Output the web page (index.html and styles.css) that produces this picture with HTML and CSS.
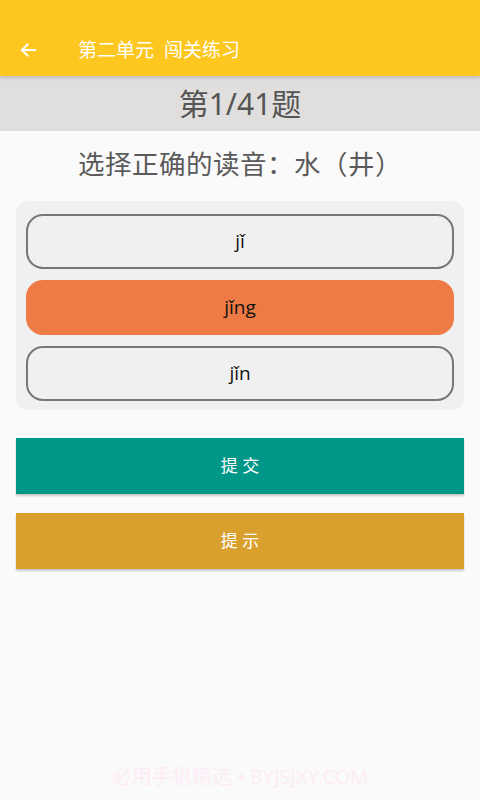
FILE: index.html
```html
<!DOCTYPE html>
<html lang="zh-CN">

<head>
  <meta charset="UTF-8">
  <meta name="viewport" content="width=device-width, initial-scale=1.0">
  <title>闯关练习</title>
  <link rel="stylesheet" href="styles.css">
</head>

<body>
  <div class="app-bar">
    <span class="back">
      <svg width="16" height="14" viewBox="0 0 16 14">
        <path d="M15 7H2M7.5 1.5L2 7l5.5 5.5" fill="none" stroke="#fff" stroke-width="2" stroke-linecap="square" />
      </svg>
    </span>
    <span class="title">第二单元&nbsp; 闯关练习</span>
  </div>

  <div class="progress">第1/41题</div>

  <div class="question">选择正确的读音：水（井）</div>

  <ul class="options">
    <li>jǐ</li>
    <li class="active">jǐng</li>
    <li>jǐn</li>
  </ul>

  <div class="btn btn-submit">提 交</div>
  <div class="btn btn-hint">提 示</div>

  <div class="watermark">必用手机精选 • BYJSJXY.COM</div>
</body>

</html>
```

FILE: styles.css
```css
* {
  margin: 0;
  padding: 0;
  box-sizing: border-box;
}

li {
  list-style: none;
}

body {
  width: 480px;
  height: 800px;
  background: #fafafa;
  font-family: "Noto Sans", "Noto Sans CJK SC", sans-serif;
  position: relative;
}

.app-bar {
  height: 76px;
  padding-top: 24px;
  background: #fec720;
  display: flex;
  align-items: center;
  color: #fff;
  box-shadow: 0 2px 3px rgba(0, 0, 0, 0.15);
  position: relative;
}

.back {
  display: flex;
  margin-left: 20px;
  width: 58px;
}

.title {
  font-size: 19px;
  line-height: 24px;
}

.progress {
  height: 55px;
  background: #e0dfdd;
  color: #555;
  font-size: 30px;
  line-height: 55px;
  text-align: center;
}

.question {
  padding: 16px 0;
  line-height: 34px;
  font-size: 26.5px;
  letter-spacing: 0.5px;
  color: #5a5a5a;
  text-align: center;
  margin-bottom: 4px;
}

.options {
  margin: 0 16px;
  padding: 13px 10px 9px;
  background: #f0f0f0;
  border-radius: 12px;
  display: flex;
  flex-direction: column;
  gap: 11px;
}

.options>li {
  height: 55px;
  line-height: 51px;
  border: 2px solid #777;
  border-radius: 17px;
  text-align: center;
  font-size: 19px;
  color: #111;
  font-family: "Open Sans", "Noto Sans", sans-serif;
}

.options>li.active {
  background: #ee7a45;
  border-color: #ee7a45;
}

.btn {
  margin: 0 16px;
  height: 56px;
  line-height: 56px;
  text-align: center;
  color: #fff;
  font-size: 17px;
  box-shadow: 0 2px 2px rgba(0, 0, 0, 0.2);
}

.btn-submit {
  margin-top: 28px;
  background: #009688;
}

.btn-hint {
  margin-top: 19px;
  background: #d9a02e;
}

.watermark {
  position: absolute;
  left: 0;
  right: 0;
  top: 764px;
  text-align: center;
  font-size: 20px;
  line-height: 26px;
  color: #fdecf6;
}
```
